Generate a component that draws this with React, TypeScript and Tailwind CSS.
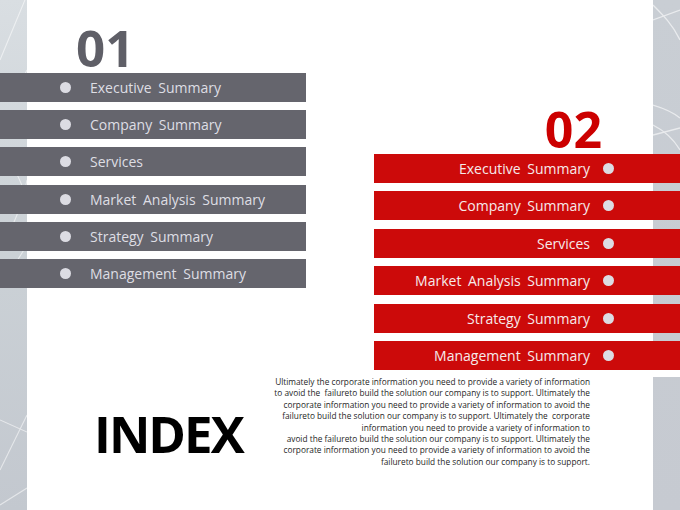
import React from 'react';

const leftItems = [
  'Executive Summary',
  'Company Summary',
  'Services',
  'Market Analysis Summary',
  'Strategy Summary',
  'Management Summary',
];

const paragraph = [
  'Ultimately the corporate information you need to provide a variety of information',
  'to avoid the  failureto build the solution our company is to support. Ultimately the',
  'corporate information you need to provide a variety of information to avoid the',
  'failureto build the solution our company is to support. Ultimately the  corporate',
  'information you need to provide a variety of information to',
  'avoid the failureto build the solution our company is to support. Ultimately the',
  'corporate information you need to provide a variety of information to avoid the',
  'failureto build the solution our company is to support.',
];

// faint white streaks on the grey side strips
const StripLines = ({ side }: { side: 'left' | 'right' }) => (
  <svg width="27" height="510" viewBox="0 0 27 510" className="block">
    {side === 'left' ? (
      <g stroke="#ffffff" fill="none" strokeWidth="1.1" opacity="0.55">
        <path d="M0 60 L27 -5" />
        <path d="M0 95 C10 90 20 85 27 70" />
        <path d="M0 150 C8 160 18 170 27 200" />
        <path d="M0 250 C10 230 20 215 27 180" />
        <path d="M5 280 L27 245" />
        <path d="M0 420 L27 432" />
        <path d="M0 470 L27 415" />
        <path d="M0 505 L27 488" />
      </g>
    ) : (
      <g stroke="#ffffff" fill="none" strokeWidth="1.3" opacity="0.6">
        <path d="M0 5 C10 15 20 25 27 40" />
        <path d="M0 20 L27 10" />
        <path d="M0 105 C10 108 20 112 27 118" />
        <path d="M0 125 C10 130 20 138 27 150" />
        <path d="M0 135 L27 128" />
        <path d="M0 330 L27 322" />
        <path d="M0 460 L27 490" />
      </g>
    )}
  </svg>
);

export default function App() {
  return (
    <div
      className="w-[680px] h-[510px] flex overflow-hidden bg-white"
      style={{ fontFamily: '"Open Sans", "Noto Sans", sans-serif' }}
    >
      {/* left strip */}
      <div className="w-[27px] h-full shrink-0 bg-gradient-to-b from-[#d9dee2] via-[#cbd1d6] to-[#c3c8cf]">
        <StripLines side="left" />
      </div>

      {/* main slide */}
      <div className="relative z-10 w-[626px] h-full shrink-0 bg-white flex flex-col">
        <div className="flex h-[370px]">
          {/* 01 column */}
          <div className="-ml-[27px] w-[306px] shrink-0 pt-[22px] flex flex-col">
            <div className="pl-[76px] text-[51px] leading-none font-bold text-[#5f5f67]">01</div>
            <div className="flex flex-col gap-[8.2px]">
              {leftItems.map((item) => (
                <div key={item} className="h-[29px] bg-[#65656d] flex items-center pl-[60px] gap-[19px]">
                  <span className="w-[11px] h-[11px] rounded-full bg-[#dcdce3]" />
                  <span className="text-[14px] text-[#dedee4] [word-spacing:3px]">{item}</span>
                </div>
              ))}
            </div>
          </div>

          {/* 02 column */}
          <div className="ml-auto -mr-[27px] w-[306px] shrink-0 pt-[104px] flex flex-col">
            <div className="pr-[78px] text-right text-[50px] leading-none font-bold text-[#cc0000]">02</div>
            <div className="flex flex-col gap-[8.4px]">
              {leftItems.map((item) => (
                <div key={item} className="h-[29px] bg-[#cc0a0a] flex items-center justify-end pr-[66px] gap-[13px]">
                  <span className="text-[14px] text-[#f6eaea] [word-spacing:3px]">{item}</span>
                  <span className="w-[11px] h-[11px] rounded-full bg-[#dcdce3]" />
                </div>
              ))}
            </div>
          </div>
        </div>

        {/* bottom: INDEX + body text */}
        <div className="flex items-start pt-[6px]">
          <div className="ml-[67px] mt-[32px] text-[51px] leading-none font-bold text-black tracking-[-2px]">INDEX</div>
          <div className="ml-auto mr-[63px] text-right text-[8.3px] leading-[11.4px] text-[#262626] whitespace-pre">
            {paragraph.map((line, i) => (
              <div key={i}>{line}</div>
            ))}
          </div>
        </div>
      </div>

      {/* right strip */}
      <div className="w-[27px] h-full shrink-0 flex flex-col bg-gradient-to-b from-[#c9ced4] to-[#c6cad1]">
        <div className="h-[370px] overflow-hidden">
          <StripLines side="right" />
        </div>
        <div className="h-[7px] bg-white" />
        <div className="flex-1" />
      </div>
    </div>
  );
}
